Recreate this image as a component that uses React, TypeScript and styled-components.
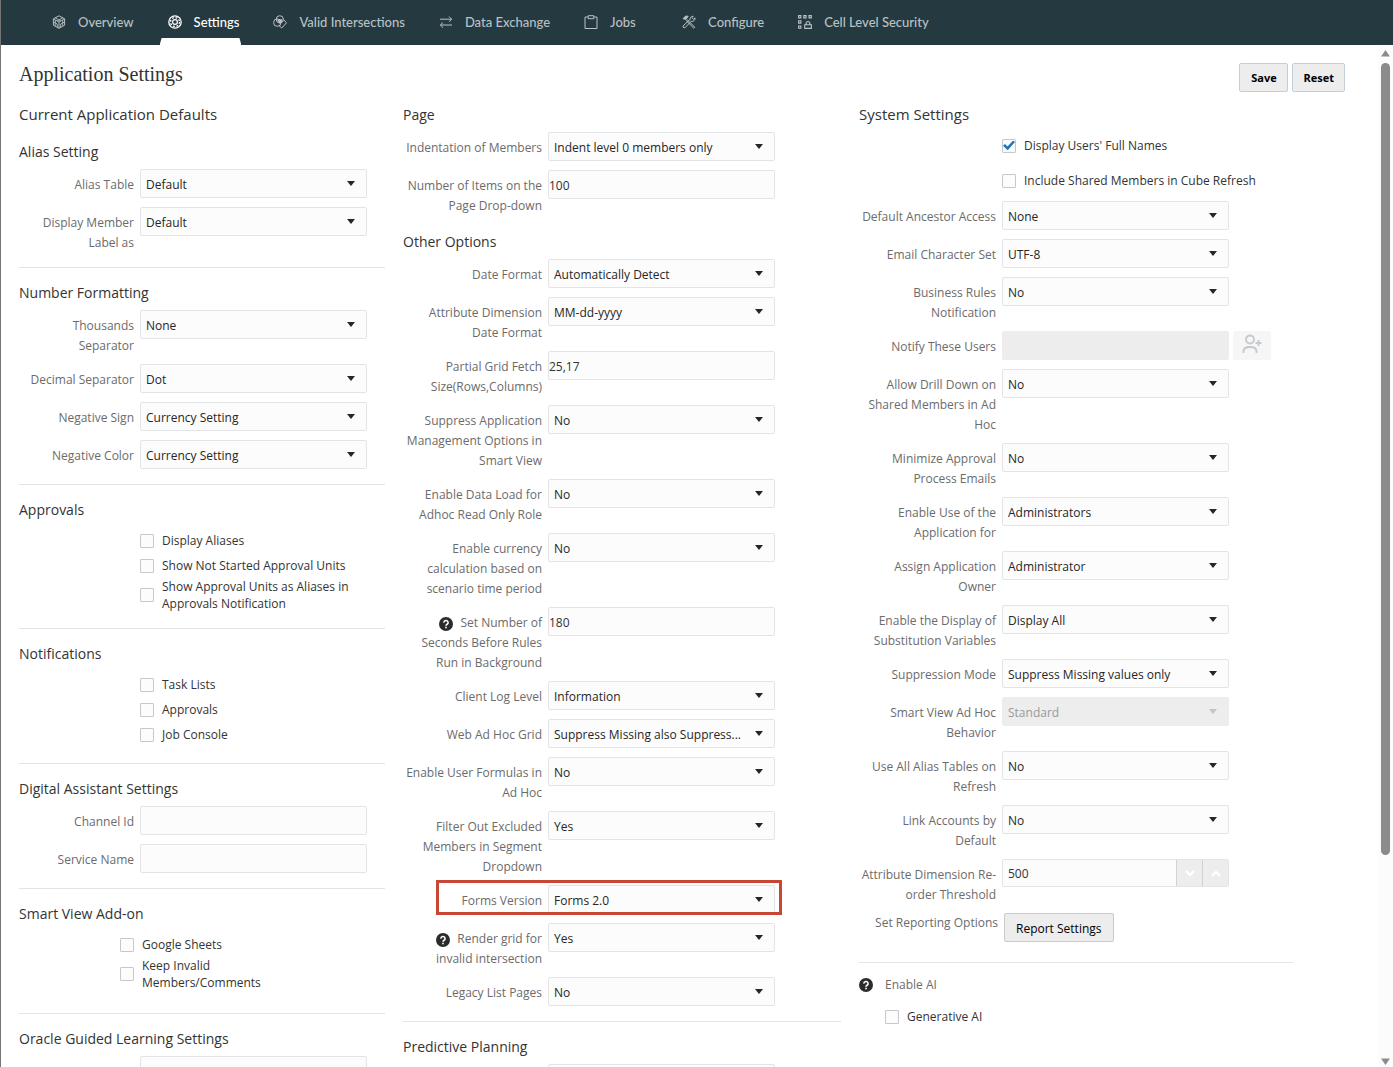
import React, { useId } from 'react';
import styled, { createGlobalStyle } from 'styled-components';

const GlobalStyle = createGlobalStyle`
  *, *::before, *::after { box-sizing: border-box; }
  body {
    margin: 0;
    background: #fff;
    color: #333;
    font-family: "Open Sans", "Noto Sans", sans-serif;
    font-size: 12px;
  }
  input, select, button { font: inherit; color: inherit; margin: 0; }
`;

/* ---------- page frame ---------- */

const Page = styled.div`
  display: flex;
  flex-direction: column;
  height: 100vh;
  overflow: hidden;
  border-left: 1px solid #757575;
`;

const Body = styled.div`
  display: flex;
  flex: 1;
  min-height: 0;
`;

const Content = styled.main`
  flex: 1;
  min-width: 0;
  overflow: auto;
  scrollbar-width: none;
`;

const Rail = styled.div`
  display: flex;
  flex-direction: column;
  align-items: center;
  width: 15px;
  padding: 5px 0 2px;
  gap: 5px;
  background: #fcfcfc;
`;

const Track = styled.div`
  flex: 1;
  width: 9px;
  padding-top: 1px;
`;

const Thumb = styled.div`
  height: 80%;
  border-radius: 5px;
  background: #8b8b8b;
`;

/* ---------- navigation ---------- */

const Nav = styled.nav`
  display: flex;
  gap: 24px;
  height: 45px;
  padding-left: 43px;
  background: #243a40;
`;

const NavLink = styled.a<{ $active?: boolean }>`
  position: relative;
  display: flex;
  align-items: center;
  gap: 12px;
  min-width: 74px;
  padding: 0 2px 2px 8px;
  color: ${p => (p.$active ? '#fff' : '#b9c1c4')};
  font-family: Lato, "Open Sans", sans-serif;
  font-size: 13px;
  font-weight: 500;
  line-height: 20px;
  text-decoration: none;
  white-space: nowrap;

  &::after {
    content: '';
    display: ${p => (p.$active ? 'block' : 'none')};
    position: absolute;
    left: 0;
    right: 0;
    bottom: 0;
    height: 7px;
    background: #fff;
    clip-path: polygon(2px 0, calc(100% - 2px) 0, 100% 100%, 0 100%);
  }
`;

const NavIcon = styled.svg`
  flex: none;
  width: 14px;
  height: 14px;
  fill: none;
  stroke: currentColor;
  stroke-width: 1;
`;

/* ---------- headings and buttons ---------- */

const TitleBar = styled.header`
  display: flex;
  justify-content: space-between;
  align-items: flex-start;
  padding: 18px 33px 12px 18px;
`;

const Title = styled.h1`
  margin: 0;
  font-family: "Liberation Serif", serif;
  font-size: 20px;
  font-weight: 400;
  line-height: 22px;
`;

const Actions = styled.div`
  display: flex;
  gap: 4px;
`;

const ActionButton = styled.button`
  height: 29px;
  min-width: 49px;
  padding: 0 10px;
  border: 1px solid #c4ced7;
  border-radius: 2px;
  background: #ededed;
  color: #000;
  font-size: 11px;
  font-weight: 700;
`;

const Columns = styled.div`
  display: grid;
  grid-template-columns: 366fr 438fr 434fr;
  gap: 18px;
  padding: 0 85px 0 18px;
`;

const Column = styled.div`
  min-width: 0;
`;

const Heading = styled.h2`
  margin: 0;
  font-size: 15px;
  font-weight: 400;
  line-height: 20px;
`;

const Subheading = styled.h3<{ $top?: number }>`
  margin: ${p => p.$top ?? 0}px 0 6px;
  font-size: 14px;
  font-weight: 400;
  line-height: 22px;
`;

const Divider = styled.hr`
  margin: 6px 0 14px;
  border: 0;
  border-top: 1px solid #e3e4e5;
`;

/* ---------- form rows ---------- */

const Row = styled.div<{ $label: number }>`
  display: grid;
  grid-template-columns: ${p => p.$label}px minmax(0, 227px) auto;
  justify-content: start;
  align-items: start;
  column-gap: 4px;
  min-height: 38px;
  padding-bottom: 8px;
`;

const HighlightRow = styled(Row)`
  position: relative;
  &::after {
    content: '';
    position: absolute;
    top: -5px;
    bottom: 8px;
    left: 33px;
    width: 346px;
    border: 3px solid #c74634;
    pointer-events: none;
  }
`;

const RowLabel = styled.label`
  padding: 6px 2px 0 0;
  color: #6b6b6b;
  line-height: 20px;
  text-align: right;
  white-space: pre-line;
`;

const TextBox = styled.input`
  display: block;
  width: 100%;
  height: 29px;
  padding: 2px 0 0;
  border: 1px solid #e2e4e5;
  border-radius: 2px;
  background: #fcfcfc;
  &:disabled { border-color: #ededed; background: #ededed; }
`;

const SelectWrap = styled.div`
  display: grid;
  align-items: center;
  & > * { grid-area: 1 / 1; }
`;

const SelectBox = styled.select`
  appearance: none;
  width: 100%;
  height: 29px;
  padding: 2px 30px 0 5px;
  border: 1px solid #e2e4e5;
  border-radius: 2px;
  background: #fcfcfc;
  color: #262626;
  &:disabled { border-color: #ededed; background: #ededed; color: #999; opacity: 1; }
`;

const Arrow = styled.svg<{ $dim?: boolean }>`
  justify-self: end;
  width: 8px;
  height: 5px;
  margin-right: 12px;
  fill: ${p => (p.$dim ? '#c4c4c4' : '#262626')};
  pointer-events: none;
`;

const Help = styled.svg`
  width: 14px;
  height: 14px;
  margin-right: 7px;
  vertical-align: -4px;
`;

const PickerButton = styled.button`
  display: flex;
  align-items: center;
  justify-content: center;
  width: 38px;
  height: 29px;
  padding: 0 0 3px;
  border: 0;
  border-radius: 2px;
  background: #f6f6f6;
`;

const Spinner = styled.div`
  display: flex;
  height: 28px;
  border: 1px solid #e2e4e5;
  border-radius: 2px;
  background: #fcfcfc;
`;

const SpinnerInput = styled.input`
  flex: 1;
  min-width: 0;
  padding: 0 5px;
  border: 0;
  background: transparent;
`;

const StepButton = styled.button`
  display: flex;
  align-items: center;
  justify-content: center;
  width: 26px;
  padding: 0;
  border: 0;
  border-left: 1px solid #d0d3d5;
  background: #ededed;
`;

const ReportRow = styled.div`
  display: grid;
  grid-template-columns: 139px auto;
  justify-content: start;
  align-items: start;
  column-gap: 6px;
  padding-bottom: 14px;
`;

const ReportLabel = styled.span`
  color: #6b6b6b;
  line-height: 20px;
  text-align: right;
`;

const ReportButton = styled.button`
  height: 29px;
  padding: 2px 11px 0;
  border: 1px solid #c8cbcd;
  border-radius: 2px;
  background: #ededed;
  color: #000;
`;

/* ---------- checkboxes ---------- */

const CheckGroup = styled.div<{ $indent: number; $start?: number; $end: number }>`
  display: flex;
  flex-direction: column;
  padding: ${p => p.$start ?? 1}px 0 ${p => p.$end}px ${p => p.$indent}px;
`;

const CheckLabel = styled.label<{ $tall?: boolean }>`
  display: flex;
  align-items: center;
  gap: 8px;
  min-height: ${p => (p.$tall ? 35 : 25)}px;
  line-height: 17px;
  white-space: pre-line;
`;

const CheckBox = styled.input`
  appearance: none;
  display: grid;
  place-items: center;
  flex: none;
  width: 14px;
  height: 14px;
  border: 1px solid #c6c9cb;
  border-radius: 1px;
  background: #fcfcfc;
  &:checked::before {
    content: '';
    width: 12px;
    height: 10px;
    background: #1f74bf;
    clip-path: polygon(0 52%, 16% 36%, 38% 60%, 84% 0, 100% 16%, 39% 98%);
  }
`;

const AiHeading = styled.div`
  display: flex;
  align-items: center;
  gap: 5px;
  padding-bottom: 10px;
  color: #6b6b6b;
  line-height: 16px;
`;

/* ---------- small parts ---------- */

function HelpIcon() {
  return (
    <Help viewBox="0 0 14 14" role="img" aria-label="Help">
      <circle cx="7" cy="7" r="7" fill="#2b2b2b" />
      <path d="M4.9 5.6a2.1 2 0 1 1 3.2 1.6c-.8.5-1.1.8-1.1 1.6" fill="none" stroke="#fff" strokeWidth="1.6" />
      <rect x="6.2" y="9.7" width="1.6" height="1.6" fill="#fff" />
    </Help>
  );
}

type FieldProps = {
  label: string;
  width: number;
  value?: string;
  kind?: 'select' | 'text' | 'spinner';
  disabled?: boolean;
  help?: boolean;
  highlight?: boolean;
  picker?: boolean;
};

function Field({ label, width, value = '', kind = 'select', disabled, help, highlight, picker }: FieldProps) {
  const id = useId();
  const Wrapper = highlight ? HighlightRow : Row;
  return (
    <Wrapper $label={width}>
      <RowLabel htmlFor={id}>
        {help && <HelpIcon />}
        {label}
      </RowLabel>
      {kind === 'select' && (
        <SelectWrap>
          <SelectBox id={id} disabled={disabled} defaultValue={value}>
            <option>{value}</option>
          </SelectBox>
          <Arrow $dim={disabled} viewBox="0 0 8 5" aria-hidden="true">
            <path d="M0 0h8L4 5z" />
          </Arrow>
        </SelectWrap>
      )}
      {kind === 'text' && <TextBox id={id} type="text" defaultValue={value} disabled={disabled} />}
      {kind === 'spinner' && (
        <Spinner>
          <SpinnerInput id={id} type="text" inputMode="numeric" defaultValue={value} />
          <StepButton type="button" aria-label="Decrease">
            <svg width="10" height="7" viewBox="0 0 10 7" fill="none" stroke="#fff" strokeWidth="2.4"><path d="M1 1l4 4 4-4" /></svg>
          </StepButton>
          <StepButton type="button" aria-label="Increase">
            <svg width="10" height="7" viewBox="0 0 10 7" fill="none" stroke="#fff" strokeWidth="2.4"><path d="M1 6l4-4 4 4" /></svg>
          </StepButton>
        </Spinner>
      )}
      {picker && (
        <PickerButton type="button" aria-label="Choose users" disabled>
          <svg width="20" height="20" viewBox="0 0 20 20" fill="none" stroke="#c6cacd" strokeWidth="1.9">
            <circle cx="8" cy="5.5" r="4" />
            <path d="M1.500 19v-1.500c0-3.500 2.500-4.500 6.500-4.500s6.500 1 6.500 4.500V19M16.500 6v6M13.500 9h6" />
          </svg>
        </PickerButton>
      )}
    </Wrapper>
  );
}

function Check({ label, checked, tall }: { label: string; checked?: boolean; tall?: boolean }) {
  return (
    <CheckLabel $tall={tall}>
      <CheckBox type="checkbox" defaultChecked={checked} />
      {label}
    </CheckLabel>
  );
}

const icons = {
  overview: (
    <>
      <path d="M7 .8l5.600 3v6.400L7 13.300 1.400 10.200V3.800z" />
      <path d="M1.400 4L7 7l5.600-3M7 7v6.200M3.200 2.900l5.600 3M10.800 2.900l-5.600 3M1.500 7l3.800 2v3.200M12.500 7L8.700 9v3.200M3.300 5.200v5.500M10.700 5.200v5.500" strokeWidth="0.9" />
    </>
  ),
  settings: (
    <>
      <circle cx="7" cy="7" r="6.200" strokeWidth="1.300" />
      <circle cx="7" cy="7" r="2.400" strokeWidth="1.200" />
      <circle cx="7" cy="7" r="4.500" strokeWidth="1.300" strokeDasharray="1.900 1.630" />
    </>
  ),
  intersections: (
    <>
      <circle cx="6.800" cy="4.300" r="3.600" />
      <circle cx="4.300" cy="7.600" r="3.700" />
      <path d="M10.300 4.300l3.200 3.400-4.700 5.300-3-2.600" />
      <path d="M4.700 4.800l4.500 0-2 4z" fill="currentColor" />
    </>
  ),
  exchange: <path d="M1 4.200h11.500M10 1.500l2.700 2.700L10 6.900M13 10H1.500M4 7.400L1.300 10 4 12.700" />,
  jobs: (
    <>
      <path d="M4 2H1v11.500h12V2h-3" />
      <path d="M4.200.7h5.600v3H4.200z" />
    </>
  ),
  configure: (
    <>
      <path d="M1 3.700L3.700 1l2.500.3-2.400 3z" fill="currentColor" />
      <path d="M4.500 4l8.300 8.200-1 1L3.600 5M9 6.500L2.800 12.900 1.200 12.400 1 11l6.300-6M8 5.500c-.6-2 .8-4.500 3.200-4.300L9.900 2.700l1.500 1.500 1.700-1.300c.3 2.300-1.800 4-4 3.500" />
    </>
  ),
  security: (
    <path d="M.6.600h2.300v2.300H.6zM5.800.600h2.300v2.300H5.800zM11 .600h2.300v2.300H11zM.6 5.800h2.300v2.300H.6zM.6 11h2.300v2.300H.6zM6.700 9.700h6.700v3.700H6.700zM8 9.500c0-4 4-4 4 0" strokeWidth="1.100" />
  ),
};

const navItems: { label: string; icon: keyof typeof icons; active?: boolean }[] = [
  { label: 'Overview', icon: 'overview' },
  { label: 'Settings', icon: 'settings', active: true },
  { label: 'Valid Intersections', icon: 'intersections' },
  { label: 'Data Exchange', icon: 'exchange' },
  { label: 'Jobs', icon: 'jobs' },
  { label: 'Configure', icon: 'configure' },
  { label: 'Cell Level Security', icon: 'security' },
];

const LEFT = 117;
const MIDDLE = 141;
const RIGHT = 139;

export default function App() {
  return (
    <Page>
      <GlobalStyle />
      <Nav>
        {navItems.map(item => (
          <NavLink key={item.label} href="#" $active={item.active} aria-current={item.active ? 'page' : undefined}>
            <NavIcon viewBox="0 0 14 14" aria-hidden="true">{icons[item.icon]}</NavIcon>
            {item.label}
          </NavLink>
        ))}
      </Nav>
      <Body>
        <Content>
          <TitleBar>
            <Title>Application Settings</Title>
            <Actions>
              <ActionButton type="button">Save</ActionButton>
              <ActionButton type="button">Reset</ActionButton>
            </Actions>
          </TitleBar>
          <Columns>
            <Column>
              <Heading>Current Application Defaults</Heading>
              <Subheading $top={17}>Alias Setting</Subheading>
              <Field width={LEFT} label="Alias Table" value="Default" />
              <Field width={LEFT} label={'Display Member\nLabel as'} value="Default" />
              <Divider />
              <Subheading>Number Formatting</Subheading>
              <Field width={LEFT} label={'Thousands\nSeparator'} value="None" />
              <Field width={LEFT} label="Decimal Separator" value="Dot" />
              <Field width={LEFT} label="Negative Sign" value="Currency Setting" />
              <Field width={LEFT} label="Negative Color" value="Currency Setting" />
              <Divider />
              <Subheading>Approvals</Subheading>
              <CheckGroup $indent={121} $end={10}>
                <Check label="Display Aliases" />
                <Check label="Show Not Started Approval Units" />
                <Check label={'Show Approval Units as Aliases in\nApprovals Notification'} />
              </CheckGroup>
              <Divider />
              <Subheading>Notifications</Subheading>
              <CheckGroup $indent={121} $end={10}>
                <Check label="Task Lists" />
                <Check label="Approvals" />
                <Check label="Job Console" />
              </CheckGroup>
              <Divider />
              <Subheading>Digital Assistant Settings</Subheading>
              <Field width={LEFT} label="Channel Id" kind="text" />
              <Field width={LEFT} label="Service Name" kind="text" />
              <Divider />
              <Subheading>Smart View Add-on</Subheading>
              <CheckGroup $indent={101} $end={16}>
                <Check label="Google Sheets" />
                <Check label={'Keep Invalid\nMembers/Comments'} />
              </CheckGroup>
              <Divider />
              <Subheading>Oracle Guided Learning Settings</Subheading>
              <Field width={LEFT} label="" kind="text" />
            </Column>

            <Column>
              <Subheading>Page</Subheading>
              <Field width={MIDDLE} label="Indentation of Members" value="Indent level 0 members only" />
              <Field width={MIDDLE} label={'Number of Items on the\nPage Drop-down'} value="100" kind="text" />
              <Subheading $top={7}>Other Options</Subheading>
              <Field width={MIDDLE} label="Date Format" value="Automatically Detect" />
              <Field width={MIDDLE} label={'Attribute Dimension\nDate Format'} value="MM-dd-yyyy" />
              <Field width={MIDDLE} label={'Partial Grid Fetch\nSize(Rows,Columns)'} value="25,17" kind="text" />
              <Field width={MIDDLE} label={'Suppress Application\nManagement Options in\nSmart View'} value="No" />
              <Field width={MIDDLE} label={'Enable Data Load for\nAdhoc Read Only Role'} value="No" />
              <Field width={MIDDLE} label={'Enable currency\ncalculation based on\nscenario time period'} value="No" />
              <Field width={MIDDLE} label={'Set Number of\nSeconds Before Rules\nRun in Background'} value="180" kind="text" help />
              <Field width={MIDDLE} label="Client Log Level" value="Information" />
              <Field width={MIDDLE} label="Web Ad Hoc Grid" value="Suppress Missing also Suppress..." />
              <Field width={MIDDLE} label={'Enable User Formulas in\nAd Hoc'} value="No" />
              <Field width={MIDDLE} label={'Filter Out Excluded\nMembers in Segment\nDropdown'} value="Yes" />
              <Field width={MIDDLE} label="Forms Version" value="Forms 2.0" highlight />
              <Field width={MIDDLE} label={'Render grid for\ninvalid intersection'} value="Yes" help />
              <Field width={MIDDLE} label="Legacy List Pages" value="No" />
              <Divider />
              <Subheading>Predictive Planning</Subheading>
              <Field width={MIDDLE} label="" kind="text" />
            </Column>

            <Column>
              <Heading>System Settings</Heading>
              <CheckGroup $indent={143} $start={4} $end={3}>
                <Check label="Display Users' Full Names" checked tall />
                <Check label="Include Shared Members in Cube Refresh" tall />
              </CheckGroup>
              <Field width={RIGHT} label="Default Ancestor Access" value="None" />
              <Field width={RIGHT} label="Email Character Set" value="UTF-8" />
              <Field width={RIGHT} label={'Business Rules\nNotification'} value="No" />
              <Field width={RIGHT} label="Notify These Users" kind="text" disabled picker />
              <Field width={RIGHT} label={'Allow Drill Down on\nShared Members in Ad\nHoc'} value="No" />
              <Field width={RIGHT} label={'Minimize Approval\nProcess Emails'} value="No" />
              <Field width={RIGHT} label={'Enable Use of the\nApplication for'} value="Administrators" />
              <Field width={RIGHT} label={'Assign Application\nOwner'} value="Administrator" />
              <Field width={RIGHT} label={'Enable the Display of\nSubstitution Variables'} value="Display All" />
              <Field width={RIGHT} label="Suppression Mode" value="Suppress Missing values only" />
              <Field width={RIGHT} label={'Smart View Ad Hoc\nBehavior'} value="Standard" disabled />
              <Field width={RIGHT} label={'Use All Alias Tables on\nRefresh'} value="No" />
              <Field width={RIGHT} label={'Link Accounts by\nDefault'} value="No" />
              <Field width={RIGHT} label={'Attribute Dimension Re-\norder Threshold'} value="500" kind="spinner" />
              <ReportRow>
                <ReportLabel>Set Reporting Options</ReportLabel>
                <ReportButton type="button">Report Settings</ReportButton>
              </ReportRow>
              <Divider />
              <AiHeading>
                <HelpIcon />
                Enable AI
              </AiHeading>
              <CheckGroup $indent={26} $end={10}>
                <Check label="Generative AI" />
              </CheckGroup>
            </Column>
          </Columns>
        </Content>
        <Rail aria-hidden="true">
          <svg width="9" height="7" viewBox="0 0 9 7" fill="#8b8b8b"><path d="M4.500 0L9 6.500H0z" /></svg>
          <Track><Thumb /></Track>
          <svg width="9" height="7" viewBox="0 0 9 7" fill="#8b8b8b"><path d="M4.500 7L9 .500H0z" /></svg>
        </Rail>
      </Body>
    </Page>
  );
}
